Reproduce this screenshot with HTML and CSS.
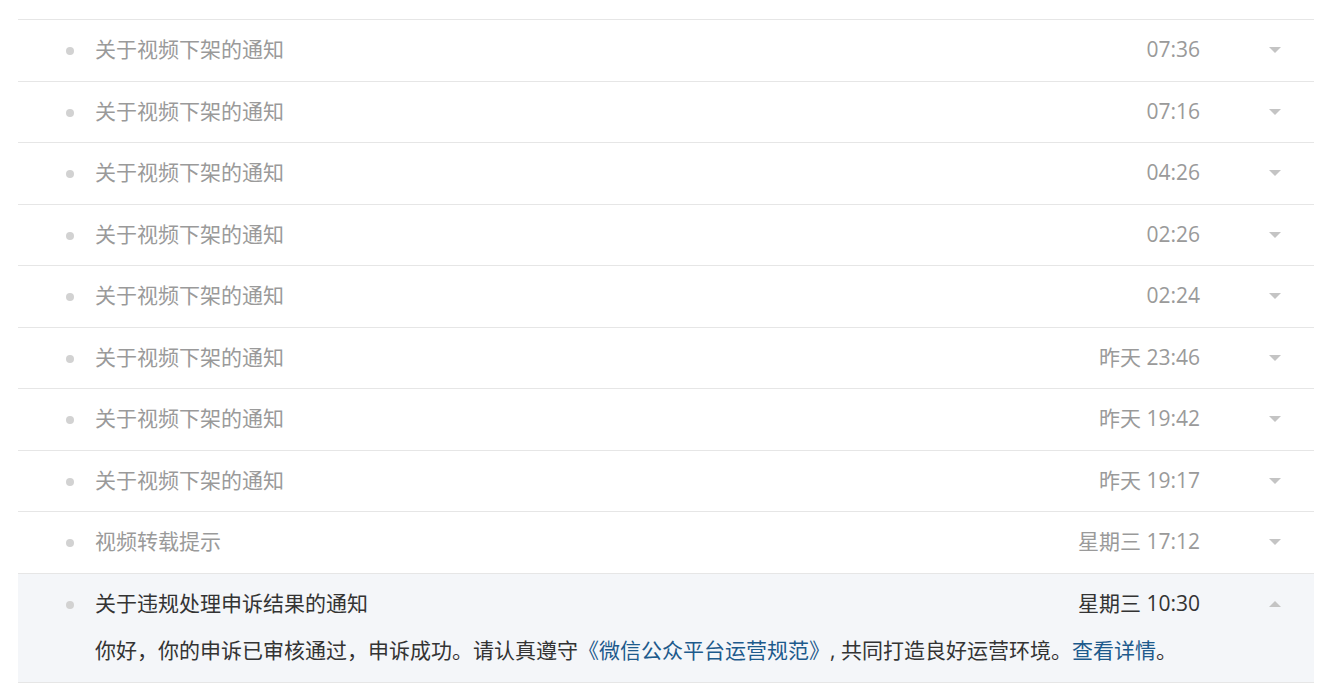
FILE: index.html
```html
<!DOCTYPE html>
<html lang="zh-CN">
<head>
<meta charset="utf-8">
<title>通知</title>
<link rel="stylesheet" href="styles.css">
</head>
<body>
<ul class="list">
  <li class="item"><div class="head"><span class="dot"></span><span class="title">关于视频下架的通知</span><span class="time">07:36</span><span class="arrow-box"><span class="arrow down"></span></span></div></li>
  <li class="item"><div class="head"><span class="dot"></span><span class="title">关于视频下架的通知</span><span class="time">07:16</span><span class="arrow-box"><span class="arrow down"></span></span></div></li>
  <li class="item"><div class="head"><span class="dot"></span><span class="title">关于视频下架的通知</span><span class="time">04:26</span><span class="arrow-box"><span class="arrow down"></span></span></div></li>
  <li class="item"><div class="head"><span class="dot"></span><span class="title">关于视频下架的通知</span><span class="time">02:26</span><span class="arrow-box"><span class="arrow down"></span></span></div></li>
  <li class="item"><div class="head"><span class="dot"></span><span class="title">关于视频下架的通知</span><span class="time">02:24</span><span class="arrow-box"><span class="arrow down"></span></span></div></li>
  <li class="item"><div class="head"><span class="dot"></span><span class="title">关于视频下架的通知</span><span class="time">昨天 23:46</span><span class="arrow-box"><span class="arrow down"></span></span></div></li>
  <li class="item"><div class="head"><span class="dot"></span><span class="title">关于视频下架的通知</span><span class="time">昨天 19:42</span><span class="arrow-box"><span class="arrow down"></span></span></div></li>
  <li class="item"><div class="head"><span class="dot"></span><span class="title">关于视频下架的通知</span><span class="time">昨天 19:17</span><span class="arrow-box"><span class="arrow down"></span></span></div></li>
  <li class="item"><div class="head"><span class="dot"></span><span class="title">视频转载提示</span><span class="time">星期三 17:12</span><span class="arrow-box"><span class="arrow down"></span></span></div></li>
  <li class="item open">
    <div class="head"><span class="dot"></span><span class="title">关于违规处理申诉结果的通知</span><span class="time">星期三 10:30</span><span class="arrow-box"><span class="arrow up"></span></span></div>
    <div class="body">你好，你的申诉已审核通过，申诉成功。请认真遵守<a class="link" href="#">《微信公众平台运营规范》</a>, 共同打造良好运营环境。<a class="link" href="#">查看详情</a>。</div>
  </li>
</ul>
</body>
</html>
```

FILE: styles.css
```css
html, body {
  margin: 0;
  padding: 0;
  background: #fff;
}
body {
  font-family: "Open Sans", "Noto Sans CJK SC", sans-serif;
  font-size: 21px;
  color: #333;
}
.list {
  list-style: none;
  margin: 0 24px 0 18px;
  padding: 19px 0 0;
}
.list::before {
  content: "";
  display: block;
  border-top: 1px solid #e6e6e6;
}
.item {
  border-bottom: 1px solid #e6e6e6;
}
.head {
  display: flex;
  align-items: center;
  height: 60.5px;
  padding-left: 48px;
  line-height: 28px;
}
.dot {
  width: 8px;
  height: 8px;
  border-radius: 50%;
  background: #d2d2d2;
  flex: none;
  margin-right: 21px;
  position: relative;
  top: 1px;
}
.title {
  flex: 1;
  color: #9a9a9a;
  white-space: nowrap;
  padding-bottom: 2px;
}
.time {
  color: #9a9a9a;
  white-space: nowrap;
  padding-bottom: 2px;
}
.arrow-box {
  width: 114px;
  flex: none;
  display: flex;
  align-items: center;
}
.arrow {
  width: 0;
  height: 0;
  margin-left: 69px;
  border-left: 6px solid transparent;
  border-right: 6px solid transparent;
}
.arrow.down {
  border-top: 6px solid #c4c4c4;
}
.arrow.up {
  border-bottom: 6px solid #c4c4c4;
}
.open {
  background: #f4f6f9;
}
.open .head {
  height: 60px;
}
.open .title,
.open .time {
  color: #333;
}
.body {
  padding: 0 0 16px 77px;
  line-height: 32px;
  color: #333;
  white-space: nowrap;
}
.link {
  color: #1d5a8c;
  text-decoration: none;
}
```
